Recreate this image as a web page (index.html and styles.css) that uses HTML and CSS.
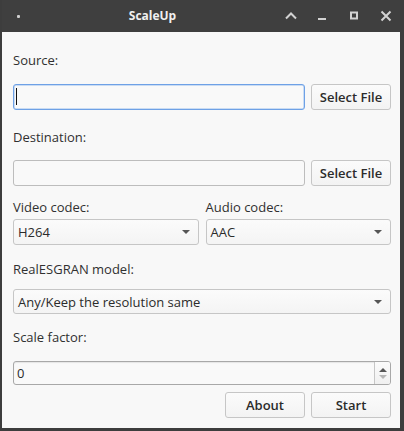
FILE: index.html
```html
<!DOCTYPE html>
<html>
<head>
<meta charset="utf-8">
<link rel="stylesheet" href="styles.css">
</head>
<body>
<div class="window">
  <div class="titlebar">
    <span class="dot"></span>
    <span class="title">ScaleUp</span>
    <div class="controls">
      <svg class="ctl" width="16" height="16" viewBox="0 0 16 16"><path d="M1 10.5 L6 5.5 L11 10.5" fill="none" stroke="#d2d2d2" stroke-width="2"/></svg>
      <svg class="ctl" width="16" height="16" viewBox="0 0 16 16"><rect x="2" y="10" width="8" height="2" fill="#d2d2d2"/></svg>
      <svg class="ctl" width="16" height="16" viewBox="0 0 16 16"><rect x="4" y="4.5" width="6" height="6" fill="none" stroke="#d2d2d2" stroke-width="2"/></svg>
      <svg class="ctl" width="16" height="16" viewBox="0 0 16 16"><path d="M3.5 3.5 L12.5 12.5 M12.5 3.5 L3.5 12.5" fill="none" stroke="#d2d2d2" stroke-width="2"/></svg>
    </div>
  </div>
  <div class="content">
    <div class="label l-source">Source:</div>
    <div class="row r-source">
      <div class="field focused"><span class="caret"></span></div>
      <button class="btn">Select File</button>
    </div>
    <div class="label l-dest">Destination:</div>
    <div class="row r-dest">
      <div class="field"></div>
      <button class="btn">Select File</button>
    </div>
    <div class="cols l-codec">
      <div class="label">Video codec:</div>
      <div class="label">Audio codec:</div>
    </div>
    <div class="cols r-codec">
      <div class="combo"><span>H264</span><span class="arrow"></span></div>
      <div class="combo"><span>AAC</span><span class="arrow"></span></div>
    </div>
    <div class="label l-model">RealESGRAN model:</div>
    <div class="combo r-model"><span>Any/Keep the resolution same</span><span class="arrow"></span></div>
    <div class="label l-scale">Scale factor:</div>
    <div class="spin r-scale">
      <span class="spin-val">0</span>
      <div class="spin-btns">
        <span class="up"></span>
        <span class="down"></span>
      </div>
    </div>
    <div class="actions">
      <button class="btn">About</button>
      <button class="btn">Start</button>
    </div>
  </div>
</div>
</body>
</html>
```
FILE: styles.css
```css
html, body {
  margin: 0;
  padding: 0;
  background: #3d3d3d;
}
.window {
  width: 404px;
  height: 431px;
  box-sizing: border-box;
  background: #3f3f3f;
  border-left: 2px solid #3d3d3d;
  border-right: 4px solid #3d3d3d;
  border-bottom: 3px solid #3d3d3d;
  display: flex;
  flex-direction: column;
  font-family: "Open Sans", "Noto Sans", sans-serif;
  font-size: 13px;
  color: #2b2b2b;
}
.titlebar {
  height: 32px;
  flex: none;
  display: flex;
  align-items: center;
  background: #3f3f3f;
}
.dot {
  width: 3px;
  height: 3px;
  background: #cfcfcf;
  border-radius: 1px;
  margin-left: 15px;
}
.title {
  flex: 1;
  text-align: center;
  color: #f0f0f0;
  font-weight: 700;
  font-size: 12px;
  padding-bottom: 1px;
}
.controls {
  display: flex;
  gap: 15px;
  margin-right: 6px;
  align-items: center;
}
.ctl {
  display: block;
}
.content {
  flex: 1;
  background: #f8f8f8;
  padding: 0 9px 0 11px;
  display: flex;
  flex-direction: column;
}
.label {
  height: 20px;
  line-height: 20px;
  color: #303030;
}
.l-source { margin-top: 18px; }
.r-source { margin-top: 14px; }
.l-dest { margin-top: 17px; }
.r-dest { margin-top: 13px; }
.l-codec { margin-top: 11px; }
.r-codec { margin-top: 2px; }
.l-model { margin-top: 14px; }
.r-model { margin-top: 10px; }
.l-scale { margin-top: 13px; }
.r-scale { margin-top: 14px; }
.row {
  display: flex;
  gap: 6px;
  height: 26px;
}
.field {
  flex: 1;
  box-sizing: border-box;
  border: 1px solid #bdbdbd;
  border-radius: 3px;
  background: #f9f9f9;
  position: relative;
}
.field.focused {
  border-color: #6ea1e6;
  box-shadow: inset 0 0 0 0.5px #9cc0ee;
}
.caret {
  position: absolute;
  left: 2px;
  top: 3px;
  width: 1px;
  height: 17px;
  background: #111;
}
.btn {
  width: 80px;
  height: 26px;
  box-sizing: border-box;
  border: 1px solid #c6c6c6;
  border-radius: 3px;
  background: linear-gradient(#fbfbfb, #f3f3f3);
  font-family: "Open Sans", "Noto Sans", sans-serif;
  font-size: 13px;
  font-weight: 600;
  color: #2b2b2b;
  padding: 0;
}
.cols {
  display: grid;
  grid-template-columns: 1fr 1fr;
  column-gap: 7px;
}
.combo {
  height: 26px;
  box-sizing: border-box;
  border: 1px solid #c6c6c6;
  border-radius: 3px;
  background: linear-gradient(#fbfbfb, #f4f4f4);
  display: flex;
  align-items: center;
  justify-content: space-between;
  padding: 0 8px 0 4px;
  color: #2b2b2b;
}
.arrow {
  width: 0;
  height: 0;
  border-left: 4px solid transparent;
  border-right: 4px solid transparent;
  border-top: 4px solid #555;
}
.r-model {
  height: 25px;
}
.spin {
  height: 24px;
  box-sizing: border-box;
  border: 1px solid #a8a8a8;
  border-radius: 3px;
  background: #f9f9f9;
  display: flex;
  align-items: stretch;
  box-shadow: inset 0 1px 1px rgba(0,0,0,0.08);
}
.spin-val {
  flex: 1;
  padding-left: 3px;
  line-height: 22px;
}
.spin-btns {
  width: 15px;
  border-left: 1px solid #c6c6c6;
  background: linear-gradient(#fbfbfb, #f0f0f0);
  display: flex;
  flex-direction: column;
  align-items: center;
  justify-content: center;
  gap: 3px;
  border-radius: 0 2px 2px 0;
}
.up {
  width: 0;
  height: 0;
  border-left: 4px solid transparent;
  border-right: 4px solid transparent;
  border-bottom: 4px solid #555;
}
.down {
  width: 0;
  height: 0;
  border-left: 4px solid transparent;
  border-right: 4px solid transparent;
  border-top: 4px solid #b5b5b5;
}
.actions {
  margin-top: 7px;
  display: flex;
  justify-content: flex-end;
  gap: 6px;
}
.actions .btn {
  height: 26px;
}
```
